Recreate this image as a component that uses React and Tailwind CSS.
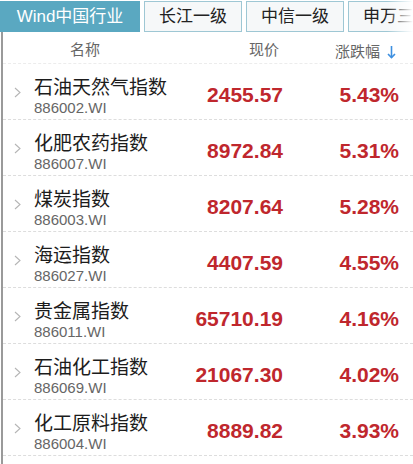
import React from 'react';

const rows = [
  { name: '石油天然气指数', code: '886002.WI', price: '2455.57', pct: '5.43%' },
  { name: '化肥农药指数', code: '886007.WI', price: '8972.84', pct: '5.31%' },
  { name: '煤炭指数', code: '886003.WI', price: '8207.64', pct: '5.28%' },
  { name: '海运指数', code: '886027.WI', price: '4407.59', pct: '4.55%' },
  { name: '贵金属指数', code: '886011.WI', price: '65710.19', pct: '4.16%' },
  { name: '石油化工指数', code: '886069.WI', price: '21067.30', pct: '4.02%' },
  { name: '化工原料指数', code: '886004.WI', price: '8889.82', pct: '3.93%' },
];

function Chevron() {
  return (
    <svg width="7" height="11" viewBox="0 0 7 11" fill="none">
      <polyline points="1,1 6,5.5 1,10" stroke="#b5b5b5" strokeWidth="1.1" />
    </svg>
  );
}

function SortArrow() {
  return (
    <svg width="9" height="14" viewBox="0 0 9 14" fill="none">
      <line x1="4.5" y1="1" x2="4.5" y2="12.5" stroke="#3d8fe0" strokeWidth="1.6" />
      <polyline points="1,9 4.5,12.5 8,9" stroke="#3d8fe0" strokeWidth="1.6" fill="none" />
    </svg>
  );
}

function Tabs() {
  const others = ['长江一级', '中信一级', '申万三级'];
  return (
    <div className="relative flex gap-1 h-[32px] pt-[1px]">
      <div className="w-[140px] shrink-0 bg-[#5aa8c1] text-white text-[17px] flex items-center justify-center">
        Wind中国行业
      </div>
      {others.map((t) => (
        <div
          key={t}
          className="w-[98px] shrink-0 border border-[#9ec7d4] bg-[#f6f8f9] text-[#222] text-[17px] flex items-center justify-center"
        >
          {t}
        </div>
      ))}
      <div className="absolute right-0 top-0 h-full w-[26px] bg-gradient-to-r from-white/0 to-white" />
    </div>
  );
}

export default function App() {
  return (
    <div
      className="w-[413px] h-[464px] bg-white overflow-hidden"
      style={{ fontFamily: '"Liberation Sans", "Noto Sans CJK SC", sans-serif' }}
    >
      <Tabs />
      <div className="ml-[1px] border-l-2 border-[#9a9a9a] h-[432px]">
        {/* header */}
        <div className="flex h-[32px] pt-[8px] text-[15px] leading-[20px] text-[#666] border-b border-dashed border-[#ececec]">
          <div className="w-[31px] shrink-0" />
          <div className="flex-1 pl-[36px]">名称</div>
          <div className="w-[100px] text-right pr-[4px]">现价</div>
          <div className="w-[116px] pr-[3px] flex justify-end items-center gap-[7px]">
            <span>涨跌幅</span>
            <SortArrow />
          </div>
          <div className="w-[14px] shrink-0" />
        </div>
        {rows.map((r) => (
          <div key={r.code} className="flex h-[56px] border-b border-dashed border-[#dddddd]">
            <div className="w-[31px] shrink-0 flex items-start justify-start pl-[11px] pt-[23px]">
              <Chevron />
            </div>
            <div className="flex-1 pt-[13px]">
              <div className="text-[19px] leading-[22px] text-[#1c1c1c]">{r.name}</div>
              <div className="text-[15px] leading-[17px] text-[#666]">{r.code}</div>
            </div>
            <div className="w-[100px] text-right pt-[19px] text-[21px] leading-[24px] font-bold text-[#bf272d]">
              {r.price}
            </div>
            <div className="w-[116px] text-right pt-[19px] text-[21px] leading-[24px] font-bold text-[#bf272d]">
              {r.pct}
            </div>
            <div className="w-[14px] shrink-0" />
          </div>
        ))}
      </div>
    </div>
  );
}
